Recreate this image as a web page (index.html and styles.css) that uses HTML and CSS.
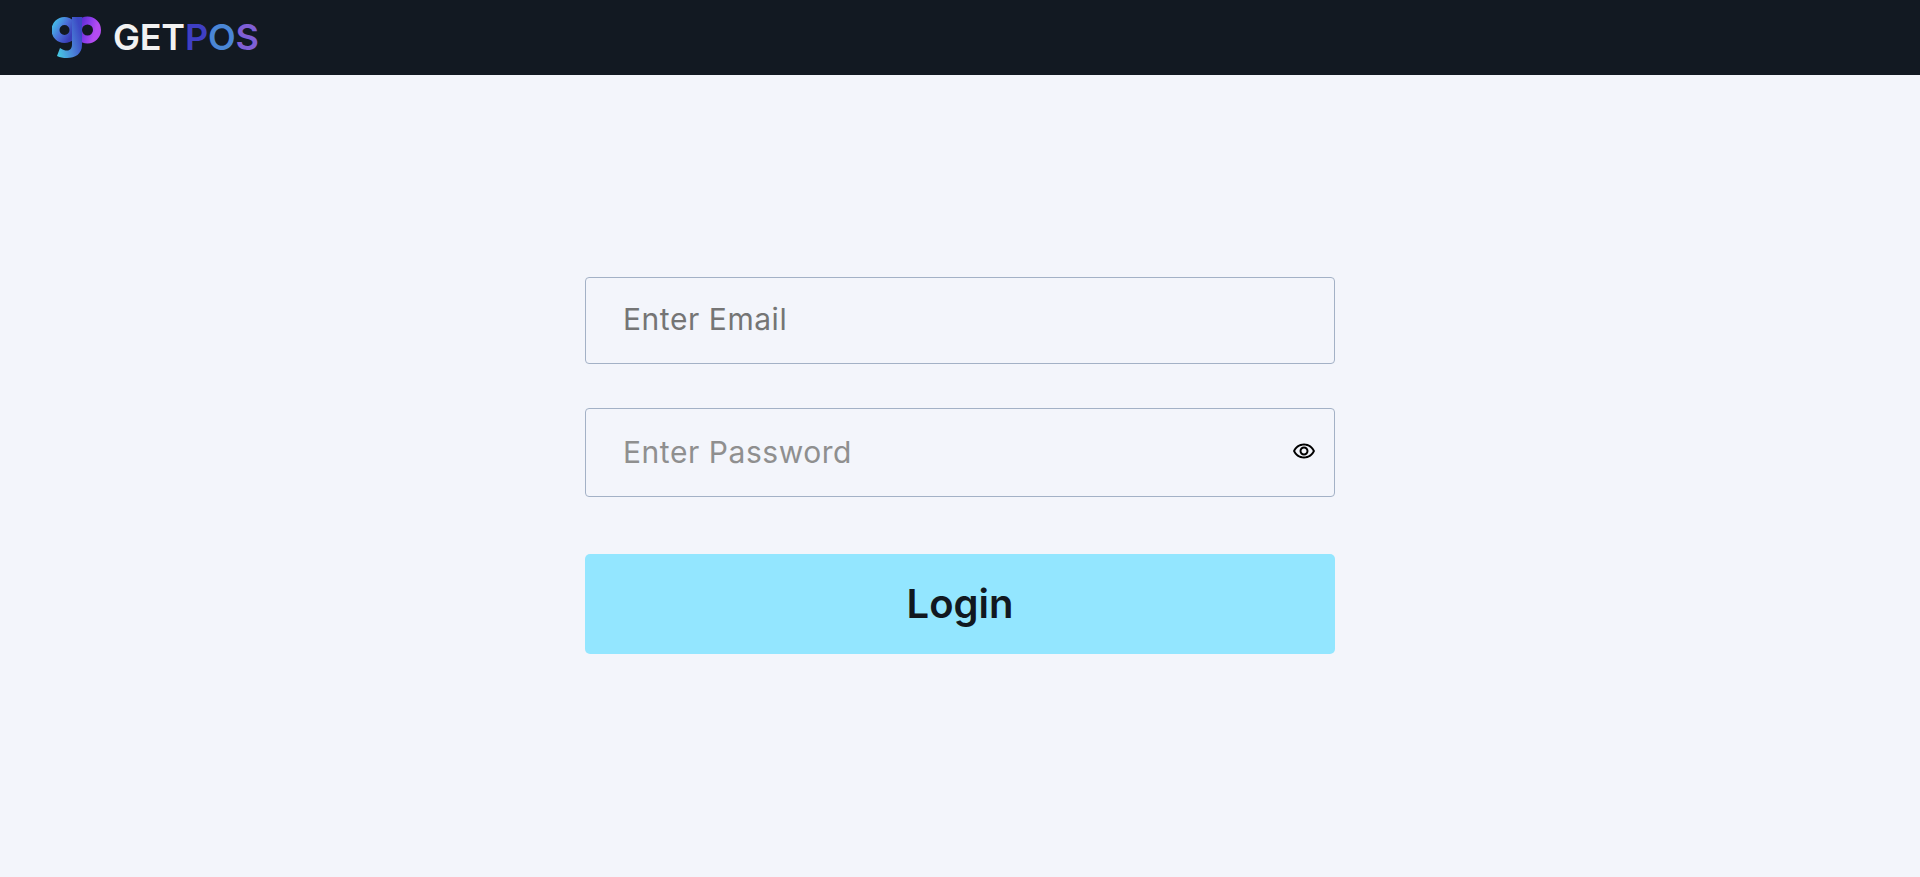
FILE: index.html
```html
<!DOCTYPE html>
<html lang="en">
<head>
<meta charset="utf-8">
<title>GetPOS Login</title>
<link rel="stylesheet" href="styles.css">
</head>
<body>
<header class="topbar">
  <div class="brand">
    <svg class="brand-mark" width="50" height="44" viewBox="0 0 50 44" aria-hidden="true">
      <defs>
        <linearGradient id="gRing" x1="0" y1="0" x2="1" y2="0.6">
          <stop offset="0" stop-color="#45b6e6"/>
          <stop offset="0.5" stop-color="#4a6fd8"/>
          <stop offset="1" stop-color="#3a3db8"/>
        </linearGradient>
        <linearGradient id="pRing" x1="0" y1="0" x2="1" y2="0.3">
          <stop offset="0" stop-color="#4f28c8"/>
          <stop offset="0.6" stop-color="#8a3cec"/>
          <stop offset="1" stop-color="#b44cf0"/>
        </linearGradient>
        <linearGradient id="stem" x1="0" y1="0.9" x2="1" y2="0.5">
          <stop offset="0" stop-color="#45cbe3"/>
          <stop offset="0.55" stop-color="#4a84d8"/>
          <stop offset="1" stop-color="#3c48c4"/>
        </linearGradient>
      </defs>
      <circle cx="35.5" cy="14" r="9.5" fill="none" stroke="url(#pRing)" stroke-width="8"/>
      <circle cx="12.5" cy="14" r="9" fill="none" stroke="url(#gRing)" stroke-width="8"/>
      <path fill="url(#stem)" d="M20 1H30V29C30 38 23 42 15 42C11 42 8 41.5 5 40L8 32C11 34 13 34.5 15 34.5C18.500 34.500 20 32 20 28Z"/>
    </svg>
    <span class="brand-name"><span class="brand-get">GET</span><span class="brand-p">P</span><span class="brand-o">O</span><span class="brand-s">S</span></span>
  </div>
</header>
<main class="page">
  <form class="login-form">
    <input class="field field-email" type="email" placeholder="Enter Email">
    <div class="password-wrap">
      <input class="field field-password" type="password" placeholder="Enter Password">
      <svg class="eye" width="24" height="24" viewBox="0 0 24 24" aria-hidden="true"><path d="M12 6.500c3.790 0 7.170 2.130 8.820 5.500-1.650 3.370-5.020 5.500-8.820 5.500S4.830 15.370 3.180 12C4.830 8.630 8.210 6.500 12 6.500m0-2C7 4.500 2.730 7.610 1 12c1.730 4.390 6 7.500 11 7.500s9.270-3.110 11-7.500c-1.730-4.390-6-7.500-11-7.500zm0 5c1.380 0 2.500 1.120 2.500 2.500s-1.120 2.500-2.500 2.500-2.500-1.120-2.500-2.500 1.120-2.500 2.500-2.500m0-2c-2.480 0-4.500 2.020-4.500 4.500s2.020 4.500 4.500 4.500 4.500-2.020 4.500-4.500-2.020-4.500-4.500-4.500z"/></svg>
    </div>
    <button class="login-btn" type="button">Login</button>
  </form>
</main>
</body>
</html>
```
FILE: styles.css
```css
* { box-sizing: border-box; }
html, body { margin: 0; height: 100%; }
body {
  background: #f3f5fb;
  font-family: "Inter", "Liberation Sans", sans-serif;
  overflow: hidden;
}
.topbar {
  height: 75px;
  background: #121922;
  display: flex;
  align-items: center;
  padding-left: 52px;
}
.brand { display: flex; align-items: center; gap: 11px; }
.brand-mark { display: block; margin-top: 1px; }
.brand-name {
  font-family: "Inter", sans-serif;
  font-weight: 600;
  font-size: 36px;
  line-height: 40px;
  letter-spacing: -0.2px;
  padding-bottom: 2px;
  color: #f2f2f2;
}
.brand-p { color: #3f3fc4; }
.brand-o { color: #4a86d6; }
.brand-s { color: #7f5fd6; }
.page { display: flex; justify-content: center; padding-top: 202px; }
.login-form { width: 750px; display: flex; flex-direction: column; }
.field {
  display: block;
  width: 100%;
  background: transparent;
  border: 1px solid #a3b1c6;
  border-radius: 4px;
  padding: 0 60px 3px 37px;
  font-family: "Inter", sans-serif;
  font-size: 30px;
  letter-spacing: 0.55px;
  outline: none;
}
.field-email { height: 87px; }
.field-email::placeholder { color: #757575; opacity: 1; }
.field-password { height: 89px; padding-bottom: 1px; }
.field-password::placeholder { color: #8f8f8f; opacity: 1; }
.password-wrap { position: relative; margin-top: 44px; }
.eye { position: absolute; right: 19px; top: 31px; fill: #000; }
.login-btn {
  margin-top: 57px;
  height: 100px;
  border: 0;
  border-radius: 5px;
  padding: 0 0 2px;
  background: #93e6ff;
  color: #111820;
  font-family: "Inter", sans-serif;
  font-weight: 600;
  font-size: 40px;
}
```
